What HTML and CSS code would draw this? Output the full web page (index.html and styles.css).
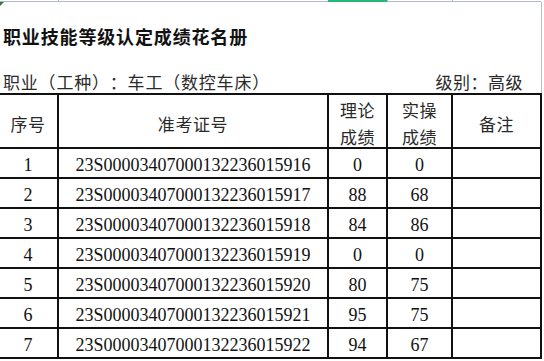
FILE: index.html
```html
<!DOCTYPE html>
<html lang="zh">
<head>
<meta charset="utf-8">
<link rel="stylesheet" href="styles.css">
</head>
<body>
<div class="sheet">
  <div class="colhead">
    <span class="seg s1"></span>
    <span class="seg s2"></span>
    <span class="seg s3 sel"></span>
    <span class="seg s4"></span>
    <span class="seg s5"></span>
    <span class="corner"></span>
  </div>
  <div class="top">
    <h1 class="title">职业技能等级认定成绩花名册</h1>
    <div class="sub">
      <span>职业（工种）：车工（数控车床）</span>
      <span class="level">级别：高级</span>
    </div>
  </div>
  <table class="grid">
    <colgroup>
      <col class="c1"><col class="c2"><col class="c3"><col class="c4"><col class="c5">
    </colgroup>
    <thead>
      <tr class="head">
        <th>序号</th>
        <th>准考证号</th>
        <th><div class="two">理论<br>成绩</div></th>
        <th><div class="two">实操<br>成绩</div></th>
        <th>备注</th>
      </tr>
    </thead>
    <tbody>
      <tr><td>1</td><td>23S00003407000132236015916</td><td>0</td><td>0</td><td></td></tr>
      <tr><td>2</td><td>23S00003407000132236015917</td><td>88</td><td>68</td><td></td></tr>
      <tr><td>3</td><td>23S00003407000132236015918</td><td>84</td><td>86</td><td></td></tr>
      <tr><td>4</td><td>23S00003407000132236015919</td><td>0</td><td>0</td><td></td></tr>
      <tr><td>5</td><td>23S00003407000132236015920</td><td>80</td><td>75</td><td></td></tr>
      <tr><td>6</td><td>23S00003407000132236015921</td><td>95</td><td>75</td><td></td></tr>
      <tr><td>7</td><td>23S00003407000132236015922</td><td>94</td><td>67</td><td></td></tr>
    </tbody>
  </table>
</div>
</body>
</html>
```

FILE: styles.css
```css
* { box-sizing: border-box; }
html, body {
  margin: 0;
  padding: 0;
  background: #fff;
  width: 544px;
  height: 361px;
  overflow: hidden;
}
body {
  font-family: "Noto Sans CJK SC", sans-serif;
  color: #1a1a1a;
  text-spacing-trim: space-all;
}
.sheet {
  width: 544px;
}
.colhead {
  display: flex;
  height: 2px;
  position: relative;
}
.seg {
  height: 2px;
  border-bottom: 1px solid #b3b8c6;
  border-left: 1px solid #b3b8c6;
}
.s1 { width: 58px; border-left: none; }
.s2 { width: 270px; }
.s3 { width: 59px; }
.s4 { width: 65px; }
.s5 { width: 89px; }
.sel {
  background: #24b776;
  border-color: #24b776;
}
.corner {
  position: absolute;
  left: 0;
  top: 2px;
  width: 0;
  height: 0;
  border-top: 4px solid #1f7d3b;
  border-right: 4px solid transparent;
}
.top {
  width: 542px;
  height: 91px;
  border-right: 1px solid #b9bdca;
  padding-top: 21px;
}
.title {
  margin: 0;
  padding-left: 3px;
  font-size: 18px;
  font-weight: 700;
  letter-spacing: 0.85px;
  line-height: 26px;
  color: #111;
}
.sub {
  margin-top: 21px;
  display: flex;
  justify-content: space-between;
  padding-left: 3px;
  padding-right: 18px;
  font-size: 17px;
  letter-spacing: 0.8px;
  line-height: 24px;
  color: #2a2a2a;
}
.level { letter-spacing: 0.5px; }
.grid {
  border-collapse: collapse;
  table-layout: fixed;
  width: 542px;
  margin-left: -1px;
}
.c1 { width: 59px; }
.c2 { width: 270px; }
.c3 { width: 59px; }
.c4 { width: 65px; }
.c5 { width: 89px; }
.grid th, .grid td {
  border: 2px solid #111;
  padding: 0;
  text-align: center;
  vertical-align: middle;
}
.grid th:first-child, .grid td:first-child { border-left: none; }
.head { height: 54px; }
.grid th {
  font-weight: 400;
  font-size: 17px;
  letter-spacing: 0.6px;
  color: #2a2a2a;
  padding-top: 4px;
}
.two {
  line-height: 27px;
  height: 46px;
  margin-top: -8px;
}
.grid td {
  height: 30px;
  font-family: "Liberation Serif", "Times New Roman", serif;
  font-size: 18px;
  line-height: 22px;
  padding-top: 3px;
  color: #111;
}
```
